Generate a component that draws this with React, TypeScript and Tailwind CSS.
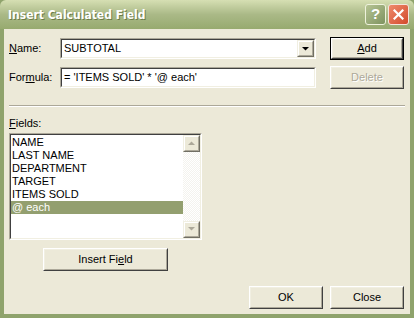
import React from 'react';

const ui = { fontFamily: '"Liberation Sans", Arial, sans-serif' };

function Sunken({ className = '', children }: { className?: string; children?: React.ReactNode }) {
  return (
    <div className={`border border-t-[#aca899] border-l-[#aca899] border-b-white border-r-white ${className}`}>
      <div className="h-full w-full border border-t-[#404040] border-l-[#404040] border-b-[#f1efe2] border-r-[#f1efe2] bg-white">
        {children}
      </div>
    </div>
  );
}

function Btn({
  children,
  className = '',
  primary = false,
  disabled = false,
}: {
  children: React.ReactNode;
  className?: string;
  primary?: boolean;
  disabled?: boolean;
}) {
  return (
    <div className={`${primary ? 'border border-black' : ''} ${className}`}>
      <div className="h-full border border-t-white border-l-white border-b-[#404040] border-r-[#404040]">
        <div
          className={`flex h-full items-center justify-center border border-t-[#f1efe2] border-l-[#f1efe2] border-b-[#aca899] border-r-[#aca899] bg-[#ece9d8] text-[11px] ${
            disabled ? 'text-[#aca899] [text-shadow:1px_1px_0_#fff]' : 'text-black'
          }`}
        >
          {children}
        </div>
      </div>
    </div>
  );
}

function ScrollArrow({ up }: { up?: boolean }) {
  return (
    <div className="h-[17px] w-[17px] border border-t-[#f1efe2] border-l-[#f1efe2] border-b-[#716f64] border-r-[#716f64]">
      <div className="flex h-full w-full items-center justify-center border border-t-white border-l-white border-b-[#aca899] border-r-[#aca899] bg-[#ece9d8]">
        <svg width="7" height="4" viewBox="0 0 7 4">
          <path d={up ? 'M0 4h7L3.5 0.5z' : 'M0 0h7L3.5 3.5z'} fill="#aca899" />
        </svg>
      </div>
    </div>
  );
}

const fields = ['NAME', 'LAST NAME', 'DEPARTMENT', 'TARGET', 'ITEMS SOLD', '@ each'];

export default function App() {
  return (
    <div className="flex h-[318px] w-[414px] flex-col overflow-hidden bg-[#8fa36c]" style={ui}>
      {/* title bar */}
      <div className="flex h-[29px] items-center rounded-t-[6px] bg-gradient-to-b from-[#d6dfb3] via-[#aab987] to-[#97aa6f] pl-[8px] pr-[5px]">
        <span
          className="flex-1 text-[12px] font-bold text-white [text-shadow:1px_1px_0_#6d7d48]"
          style={{ fontFamily: '"DejaVu Sans Condensed", "Liberation Sans", sans-serif' }}
        >
          Insert Calculated Field
        </span>
        <div className="flex gap-[2px]">
          <div className="flex h-[21px] w-[21px] items-center justify-center rounded-[3px] border border-[#eef2dc] bg-gradient-to-br from-[#b6c494] to-[#7f9360] text-[15px] font-bold text-white">
            ?
          </div>
          <div className="flex h-[21px] w-[21px] items-center justify-center rounded-[3px] border border-[#f3e4dc] bg-gradient-to-br from-[#ee8a6c] to-[#d2482a]">
            <svg width="11" height="11" viewBox="0 0 11 11">
              <path d="M1.5 1.5l8 8M9.5 1.5l-8 8" stroke="#fff" strokeWidth="2.2" strokeLinecap="square" />
            </svg>
          </div>
        </div>
      </div>

      {/* client area */}
      <div className="mx-[4px] mb-[4px] flex flex-1 flex-col bg-[#ece9d8] px-[5px] pt-[8px] text-[11px] text-black">
        <div className="flex items-center">
          <span className="w-[51px]">
            <u>N</u>ame:
          </span>
          <Sunken className="h-[21px] w-[256px]">
            <div className="flex h-full items-center pl-[2px]">
              <span className="flex-1">SUBTOTAL</span>
              <div className="h-[17px] w-[17px] border border-t-[#f1efe2] border-l-[#f1efe2] border-b-[#716f64] border-r-[#716f64]">
                <div className="flex h-full w-full items-center justify-center border border-t-white border-l-white border-b-[#aca899] border-r-[#aca899] bg-[#ece9d8]">
                  <svg width="7" height="4" viewBox="0 0 7 4">
                    <path d="M0 0h7L3.5 3.5z" fill="#000" />
                  </svg>
                </div>
              </div>
            </div>
          </Sunken>
          <Btn primary className="ml-[14px] h-[23px] w-[74px]">
            <span>
              <u>A</u>dd
            </span>
          </Btn>
        </div>

        <div className="mt-[6px] flex items-center">
          <span className="w-[51px]">
            For<u>m</u>ula:
          </span>
          <Sunken className="h-[21px] w-[256px]">
            <div className="flex h-full items-center pl-[2px]">= 'ITEMS SOLD' * '@ each'</div>
          </Sunken>
          <Btn disabled className="ml-[14px] h-[23px] w-[74px]">
            Delete
          </Btn>
        </div>

        <div className="mt-[16px] border-t border-b border-t-[#aca899] border-b-white" />

        <div className="mt-[8px]">
          <u>F</u>ields:
        </div>

        <Sunken className="mt-[1px] h-[107px] w-[193px]">
          <div className="flex h-full">
            <div className="flex-1 pt-[1px] leading-[13px]">
              {fields.map((f) => (
                <div
                  key={f}
                  className={`pl-[1px] ${f === '@ each' ? 'bg-[#939f6f] text-white' : ''}`}
                >
                  {f}
                </div>
              ))}
            </div>
            <div className="flex w-[17px] flex-col justify-between bg-[repeating-conic-gradient(#f4f3ee_0_25%,#ffffff_0_50%)] bg-[length:2px_2px]">
              <ScrollArrow up />
              <ScrollArrow />
            </div>
          </div>
        </Sunken>

        <Btn className="ml-[34px] mt-[8px] h-[23px] w-[125px]">
          <span>
            Insert Fi<u>e</u>ld
          </span>
        </Btn>

        <div className="mt-[15px] flex justify-end gap-[7px] pr-[1px]">
          <Btn className="h-[23px] w-[74px]">OK</Btn>
          <Btn className="h-[23px] w-[74px]">Close</Btn>
        </div>
      </div>
    </div>
  );
}
